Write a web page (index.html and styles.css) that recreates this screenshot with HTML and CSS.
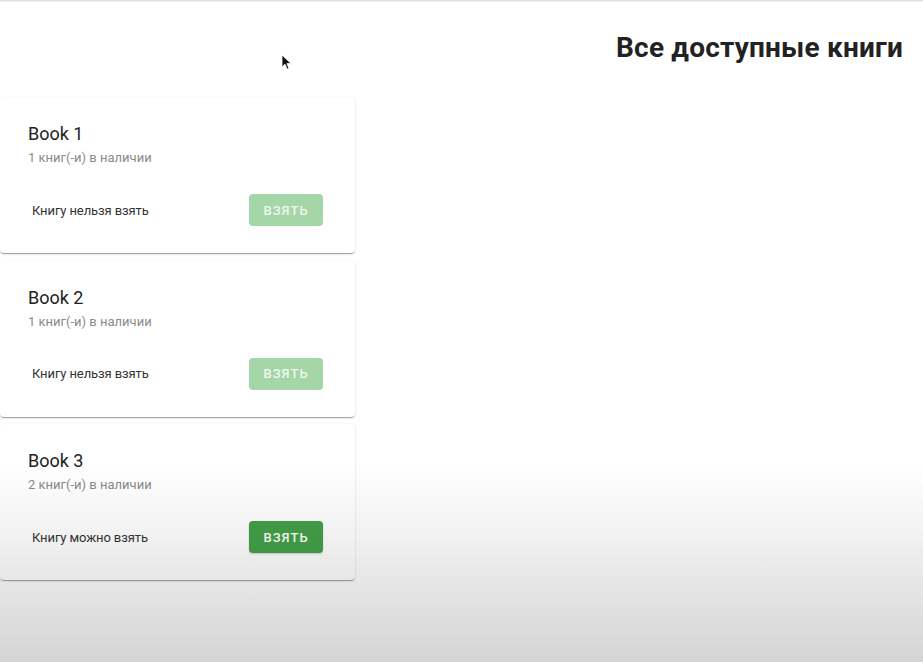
FILE: index.html
```html
<!DOCTYPE html>
<html lang="ru">
<head>
<meta charset="utf-8">
<title>Все доступные книги</title>
<link rel="stylesheet" href="styles.css">
</head>
<body>
<div class="topbar"></div>
<main class="page">
  <header class="header">
    <h1 class="heading">Все доступные книги</h1>
  </header>
  <section class="list">
    <article class="card">
      <div class="card-content">
        <h2 class="card-title">Book 1</h2>
        <p class="card-sub">1 книг(-и) в наличии</p>
      </div>
      <div class="card-actions">
        <span class="status">Книгу нельзя взять</span>
        <button class="btn btn-disabled" disabled>Взять</button>
      </div>
    </article>
    <article class="card">
      <div class="card-content">
        <h2 class="card-title">Book 2</h2>
        <p class="card-sub">1 книг(-и) в наличии</p>
      </div>
      <div class="card-actions">
        <span class="status">Книгу нельзя взять</span>
        <button class="btn btn-disabled" disabled>Взять</button>
      </div>
    </article>
    <article class="card">
      <div class="card-content">
        <h2 class="card-title">Book 3</h2>
        <p class="card-sub">2 книг(-и) в наличии</p>
      </div>
      <div class="card-actions">
        <span class="status">Книгу можно взять</span>
        <button class="btn">Взять</button>
      </div>
    </article>
  </section>
</main>
<div class="shade"></div>
<svg class="cursor" width="12" height="17" viewBox="0 0 12 17" aria-hidden="true">
  <path d="M1 1 L1 13 L4 10.2 L6.2 15.2 L8 14.4 L5.9 9.6 L10 9.6 Z" fill="#111" stroke="#fff" stroke-width="0.8"/>
</svg>
</body>
</html>
```

FILE: styles.css
```css
html, body {
  margin: 0;
  padding: 0;
  background: #fff;
  height: 100%;
  overflow: hidden;
}
body {
  font-family: Roboto, "Noto Sans", "Liberation Sans", sans-serif;
  color: #222;
  position: relative;
}
.topbar {
  height: 2px;
  background: linear-gradient(to bottom, #dcdcdc, #f4f4f4);
}
.page {
  display: flex;
  flex-direction: column;
}
.header {
  display: flex;
  justify-content: flex-end;
  padding: 29px 20px 0 0;
}
.heading {
  margin: 0;
  font-size: 28px;
  line-height: 33px;
  font-weight: 700;
  color: #222;
  letter-spacing: 0.2px;
}
.list {
  margin-top: 33px;
  width: 355px;
  display: flex;
  flex-direction: column;
  gap: 7.5px;
}
.card {
  box-sizing: border-box;
  height: 156px;
  background: #fff;
  border-radius: 4px;
  box-shadow: 0 2px 1px -1px rgba(0,0,0,0.2), 0 1px 1px 0 rgba(0,0,0,0.14), 0 1px 3px 0 rgba(0,0,0,0.12);
  padding: 25px 32px 27px 28px;
  display: flex;
  flex-direction: column;
}
.card-title {
  margin: 0 0 2px;
  font-size: 18px;
  line-height: 24px;
  font-weight: 400;
  color: #222;
}
.card-sub {
  margin: 0;
  font-size: 13px;
  line-height: 20px;
  color: #8a8a8a;
}
.card-actions {
  margin-top: 26px;
  padding-left: 4px;
  display: flex;
  align-items: center;
  justify-content: space-between;
}
.status {
  font-size: 13px;
  color: #333;
  font-weight: 400;
  letter-spacing: -0.1px;
}
.btn {
  width: 74px;
  height: 32px;
  border: 0;
  border-radius: 4px;
  background: #43a047;
  color: #fff;
  font-family: inherit;
  font-size: 13px;
  font-weight: 500;
  letter-spacing: 1px;
  text-transform: uppercase;
  box-shadow: 0 1px 2px rgba(0,0,0,0.2);
  padding: 0;
}
.btn-disabled {
  background: #a5d6a7;
  color: #eef8ee;
  box-shadow: none;
}
.shade {
  position: absolute;
  left: 0;
  right: 0;
  top: 462px;
  height: 200px;
  pointer-events: none;
  background: linear-gradient(to bottom, rgba(0,0,0,0) 0%, rgba(0,0,0,0.05) 35%, rgba(0,0,0,0.1) 62%, rgba(0,0,0,0.17) 100%);
}
.cursor {
  position: absolute;
  left: 281px;
  top: 54px;
}
```
